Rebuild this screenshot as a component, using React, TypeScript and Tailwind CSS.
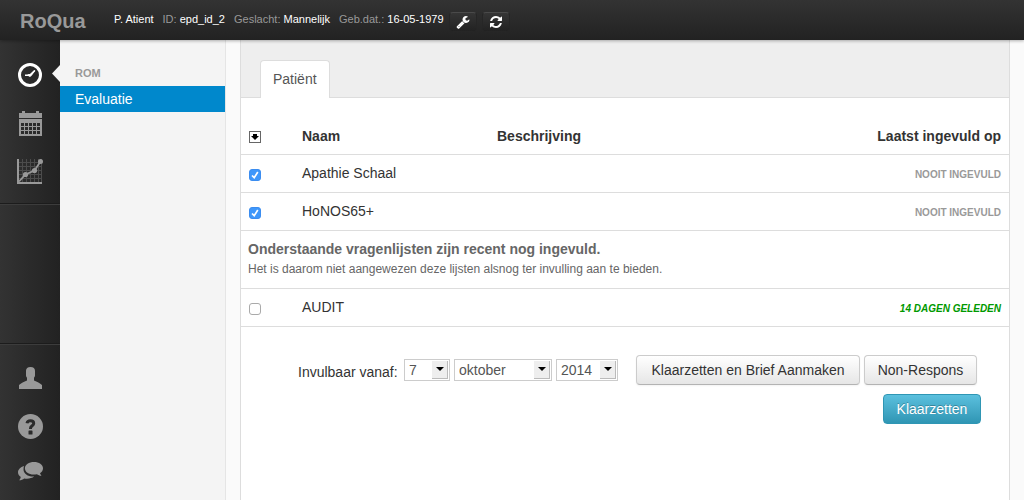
import type { ReactNode } from "react";

function GaugeIcon() {
  return (
    <svg width="24" height="24" viewBox="0 0 24 24" fill="none" stroke="#fff" aria-hidden="true">
      <circle cx="12" cy="12" r="10.5" strokeWidth="3" />
      <path d="M7 12.300h5M12 12l4.800-4.500" strokeWidth="1.600" />
      <path d="M9.500 11.300 12.500 11l4-4 .8.800-3.300 4.500-1.500 1.400h-1.500z" fill="#fff" stroke="none" />
    </svg>
  );
}

function CalendarIcon() {
  const cols = [2, 6, 10, 14, 18];
  const rows = [12, 16, 20];
  return (
    <svg width="23" height="25" viewBox="0 0 23 25" fill="#999" shapeRendering="crispEdges" aria-hidden="true">
      <path d="M3 0h3v2h11V0h3v2h3v5H0V2h3zM0 8h23v17H0z" />
      {rows.map((y) => cols.map((x) => <rect key={`${x}-${y}`} x={x} y={y} width="3" height="3" fill="#2b2b2b" />))}
    </svg>
  );
}

function ChartIcon() {
  return (
    <svg width="26" height="25" viewBox="0 0 26 25" fill="none" aria-hidden="true">
      <path
        d="M2 3.5h23M2 7.5h23M2 11.5h23M2 15.5h23M2 19.5h23M5.5 0v23M9.5 0v23M13.5 0v23M17.5 0v23M21.5 0v23M24.5 0v23"
        stroke="#4c4c4c"
      />
      <path d="M1 0v24h24" stroke="#999" strokeWidth="2" />
      <path d="M2 22.5 8.5 15.5l9-4L23.5 2.5" stroke="#999" strokeWidth="1.8" />
      <g fill="#999">
        <circle cx="8.5" cy="15.5" r="2.6" />
        <circle cx="17.5" cy="11.5" r="2.6" />
        <circle cx="23.5" cy="2.5" r="2.5" />
      </g>
    </svg>
  );
}

function UserIcon() {
  return (
    <svg width="23" height="22" viewBox="0 0 23 22" fill="#999" aria-hidden="true">
      <path d="M11.500 0C14.500 0 16 1.500 16 4v4.500c0 1-.6 1.800-1 2.300V13.500c3 1.500 6 2.500 8 4.500v4H0v-4c2-2 5-3 8-4.500v-2.700C7.600 10.300 7 9.500 7 8.500V4c0-2.500 1.500-4 4.500-4z" />
    </svg>
  );
}

function HelpIcon() {
  return (
    <svg width="25" height="25" viewBox="0 0 25 25" aria-hidden="true">
      <circle cx="12.500" cy="12.500" r="12.500" fill="#999" />
      <path d="M9 9.200c.3-1.500 1.600-2.400 3.400-2.400 2 0 3.300 1 3.300 2.600 0 2.300-3.200 2.300-3.200 4.800v.8" fill="none" stroke="#2b2b2b" strokeWidth="3" />
      <rect x="10.500" y="16.500" width="4" height="4" rx=".6" fill="#2b2b2b" />
    </svg>
  );
}

function CommentsIcon() {
  return (
    <svg width="25" height="19" viewBox="0 0 25 19" fill="#999" aria-hidden="true">
      <path d="M6 4C2.500 5.200 0 7.500 0 10.300c0 2 1.100 3.500 2.800 4.700-.2 1.200-.8 2.200-1.600 3.200 2 0 3.800-.9 5-1.800 3.600.7 7.500 0 10-1.900C10.500 15 5.500 12 5.500 7.500 5.500 6.200 5.600 5 6 4z" />
      <path d="M16 0c5 0 9 2.700 9 6.300 0 2.200-1.200 3.900-3 5 .3 1 .8 1.700 1.500 2.500-1.900-.1-3.400-.7-4.600-1.600-6 1.500-12-1.200-12-5.900C6.900 2.700 11 0 16 0z" />
    </svg>
  );
}

function WrenchIcon() {
  return (
    <svg width="14" height="14" viewBox="0 0 1792 1792" fill="currentColor" aria-hidden="true">
      <path d="M448 1472q0-26-19-45t-45-19-45 19-19 45 19 45 45 19 45-19 19-45zm644-420l-682 682q-37 37-90 37-52 0-91-37l-106-108q-38-36-38-90 0-53 38-91l681-681q39 98 114.500 173.500t173.500 114.500zm634-435q0 39-23 106-47 134-164.500 217.500t-258.500 83.500q-185 0-316.500-131.500t-131.500-316.500 131.500-316.500 316.500-131.500q58 0 121.500 16.500t107.500 46.500q16 11 16 28t-16 28l-293 169v224l193 107q5-3 79-48.500t135.500-81 70.500-35.500q15 0 23.500 10t8.500 25z" />
    </svg>
  );
}

function RefreshIcon() {
  return (
    <svg width="14" height="14" viewBox="0 0 1792 1792" fill="currentColor" aria-hidden="true">
      <path d="M1639 1056q0 5-1 7-64 268-268 434.500t-478 166.500q-146 0-282.500-55t-243.500-157l-129 129q-19 19-45 19t-45-19-19-45v-448q0-26 19-45t45-19h448q26 0 45 19t19 45-19 45l-137 137q71 66 161 102t187 36q134 0 250-65t186-179q11-17 53-117 8-23 30-23h192q13 0 22.500 9.500t9.500 22.500zm25-800v448q0 26-19 45t-45 19h-448q-26 0-45-19t-19-45 19-45l138-138q-148-137-349-137-134 0-250 65t-186 179q-11 17-53 117-8 23-30 23h-199q-13 0-22.500-9.500t-9.500-22.500v-7q65-268 270-434.500t480-166.500q146 0 284 55.500t245 156.500l130-129q19-19 45-19t45 19 19 45z" />
    </svg>
  );
}

function SideLink({ label, active, children }: { label: string; active?: boolean; children: ReactNode }) {
  return (
    <a href="#" aria-label={label} className="relative flex h-12 w-full items-center justify-center">
      {children}
      {active && (
        <svg className="absolute top-3.5 right-0" width="8" height="17" viewBox="0 0 8 17" aria-hidden="true">
          <path d="M8 0v17L0 8.500z" fill="#f4f4f4" />
        </svg>
      )}
    </a>
  );
}

function Info({ label, value }: { label?: string; value: string }) {
  return (
    <span className="whitespace-nowrap text-white">
      {label && <span className="text-[#999]">{label} </span>}
      {value}
    </span>
  );
}

function ToolButton({ label, children }: { label: string; children: ReactNode }) {
  return (
    <button
      type="button"
      aria-label={label}
      className="flex h-5 w-7 items-center justify-center rounded border border-[#262626] border-t-[#4a4a4a] bg-linear-to-b from-[#353535] to-[#222] text-white"
    >
      {children}
    </button>
  );
}

function DateSelect({ label, value, options, width }: { label: string; value: string; options: string[]; width: string }) {
  return (
    <span className={`relative inline-flex h-[22px] ${width}`}>
      <select
        aria-label={label}
        defaultValue={value}
        className="h-full w-full appearance-none border border-[#ccc] bg-white pl-1 text-sm leading-5 text-[#555]"
      >
        {options.map((o) => (
          <option key={o}>{o}</option>
        ))}
      </select>
      <span className="pointer-events-none absolute inset-y-0.5 right-0.5 flex w-4 items-center justify-center border-r border-b border-[#bbb] bg-[#eee]">
        <svg width="8" height="4" viewBox="0 0 8 4" aria-hidden="true">
          <path d="M0 0h8L4 4z" fill="#000" />
        </svg>
      </span>
    </span>
  );
}

function CheckBox({ label, checked }: { label: string; checked?: boolean }) {
  return (
    <span className="relative mt-1 flex size-3">
      <input
        type="checkbox"
        aria-label={label}
        defaultChecked={checked}
        className="peer size-3 appearance-none rounded-[3px] border border-[#aaa] bg-white checked:border-[#3b8df0] checked:bg-[#3f97fa]"
      />
      <svg className="pointer-events-none absolute inset-0 hidden peer-checked:block" width="12" height="12" viewBox="0 0 12 12" fill="none" aria-hidden="true">
        <path d="M3 6.500 5.200 8.700 8.800 3" stroke="#fff" strokeWidth="1.700" />
      </svg>
    </span>
  );
}

function Row({ name, when, checked, recent }: { name: string; when: string; checked?: boolean; recent?: boolean }) {
  return (
    <tr className="h-[38px] border-b border-[#ddd]">
      <td className="pl-2">
        <CheckBox label={name} checked={checked} />
      </td>
      <td>{name}</td>
      <td />
      <td
        className={
          recent
            ? "pt-[3px] pr-2 text-right text-[10px] font-bold text-[#090] italic"
            : "pt-[3px] pr-2 text-right text-[10px] font-bold text-[#999]"
        }
      >
        {when}
      </td>
    </tr>
  );
}

const buttonClass =
  "h-[30px] rounded border border-[#ccc] border-b-[#b3b3b3] bg-linear-to-b from-white to-[#e6e6e6] text-center text-sm whitespace-nowrap text-[#333] shadow-[0_1px_2px_rgba(0,0,0,0.05)]";

export default function App() {
  return (
    <div className="flex min-h-screen flex-col bg-[#fafafa] font-['Liberation_Sans',Arial,sans-serif] text-sm leading-5 text-[#333]">
      <header className="z-10 flex h-10 items-start bg-linear-to-b from-[#333] to-[#222] shadow-[0_1px_3px_rgba(0,0,0,0.3)]">
        <a href="#" className="w-[114px] shrink-0 pt-[11px] pl-5 text-xl leading-5 font-bold text-[#999]">
          RoQua
        </a>
        <div className="flex gap-[9px] pt-[9px] text-[11px]">
          <Info value="P. Atient" />
          <Info label="ID:" value="epd_id_2" />
          <Info label="Geslacht:" value="Mannelijk" />
          <Info label="Geb.dat.:" value="16-05-1979" />
        </div>
        <div className="flex gap-[5px] pt-3 pl-[5px]">
          <ToolButton label="Instellingen">
            <WrenchIcon />
          </ToolButton>
          <ToolButton label="Vernieuwen">
            <RefreshIcon />
          </ToolButton>
        </div>
      </header>

      <div className="flex grow">
        <nav className="flex w-[60px] shrink-0 flex-col bg-linear-to-r from-[#333] to-[#222]" aria-label="Hoofdmenu">
          <div className="h-[164px] border-b border-[#1c1c1c] pt-[11px]">
            <SideLink label="Evaluatie" active>
              <GaugeIcon />
            </SideLink>
            <SideLink label="Agenda">
              <CalendarIcon />
            </SideLink>
            <SideLink label="Grafiek">
              <ChartIcon />
            </SideLink>
          </div>
          <div className="grow border-t border-b border-t-[#3c3c3c] border-b-[#1c1c1c]" />
          <div className="h-[156px] border-t border-[#3c3c3c] pt-[9px]">
            <SideLink label="Gebruiker">
              <UserIcon />
            </SideLink>
            <SideLink label="Help">
              <HelpIcon />
            </SideLink>
            <a href="#" aria-label="Berichten" className="flex h-[42px] items-center justify-center">
              <CommentsIcon />
            </a>
          </div>
        </nav>

        <aside className="w-[166px] shrink-0 border-r border-[#e5e5e5] bg-[#f4f4f4] pt-[23px]">
          <h2 className="pl-[15px] text-[11px] leading-5 font-bold text-[#999]">ROM</h2>
          <a href="#" className="mt-[3px] block h-[26px] bg-[#0088cc] pl-[15px] leading-[26px] text-white">
            Evaluatie
          </a>
        </aside>

        <main className="mr-3.5 ml-3.5 min-w-0 grow border-x border-[#ddd] bg-white">
          <div className="flex h-[58px] items-end border-b border-[#ddd] bg-[#eee] pl-[19px]">
            <a href="#" className="-mb-px h-[38px] rounded-t border border-b-0 border-[#ddd] bg-white px-3 leading-9 text-[#555]">
              Patiënt
            </a>
          </div>

          <table className="mt-[19px] w-full table-fixed border-collapse">
            <colgroup>
              <col className="w-[61px]" />
              <col className="w-[195px]" />
              <col />
              <col className="w-[200px]" />
            </colgroup>
            <thead>
              <tr className="h-[37px] border-b border-[#ddd] text-left">
                <th className="pl-2">
                  <button type="button" aria-label="Selectie" className="mt-1 flex size-3 items-center justify-center border border-[#666] bg-white">
                    <svg width="8" height="8" viewBox="0 0 8 8" aria-hidden="true">
                      <path d="M2 1h4v2h2L4 7 0 3h2z" fill="#000" />
                    </svg>
                  </button>
                </th>
                <th className="pt-px">Naam</th>
                <th className="pt-px">Beschrijving</th>
                <th className="pt-px pr-2 text-right">Laatst ingevuld op</th>
              </tr>
            </thead>
            <tbody>
              <Row name="Apathie Schaal" when="NOOIT INGEVULD" checked />
              <Row name="HoNOS65+" when="NOOIT INGEVULD" checked />
              <tr className="h-[58px] border-b border-[#ddd] text-[#666]">
                <td colSpan={4} className="pl-[7px]">
                  <strong className="block">Onderstaande vragenlijsten zijn recent nog ingevuld.</strong>
                  <small className="block text-xs leading-5">
                    Het is daarom niet aangewezen deze lijsten alsnog ter invulling aan te bieden.
                  </small>
                </td>
              </tr>
              <Row name="AUDIT" when="14 DAGEN GELEDEN" recent />
            </tbody>
          </table>

          <form className="flex flex-wrap items-start justify-end gap-y-[9px] pt-7 pr-7" onSubmit={(e) => e.preventDefault()}>
            <div className="mr-[18px] flex gap-1 pt-1">
              <span className="w-[102px] pt-[3px]">Invulbaar vanaf:</span>
              <DateSelect label="Dag" value="7" options={["6", "7", "8"]} width="w-[46px]" />
              <DateSelect label="Maand" value="oktober" options={["september", "oktober", "november"]} width="w-[98px]" />
              <DateSelect label="Jaar" value="2014" options={["2013", "2014", "2015"]} width="w-[62px]" />
            </div>
            <div className="mr-1 flex gap-1">
              <button type="button" className={`${buttonClass} w-[224px]`}>
                Klaarzetten en Brief Aanmaken
              </button>
              <button type="button" className={`${buttonClass} w-[113px]`}>
                Non-Respons
              </button>
            </div>
            <div className="flex w-full justify-end">
              <button
                type="submit"
                className="h-[30px] w-[98px] rounded border border-[#2f96b4] bg-linear-to-b from-[#5bc0de] to-[#2f96b4] text-sm text-white text-shadow-[0_-1px_0_rgba(0,0,0,0.25)]"
              >
                Klaarzetten
              </button>
            </div>
          </form>
        </main>
        <div className="w-px bg-[#e5e5e5]" />
      </div>
    </div>
  );
}
